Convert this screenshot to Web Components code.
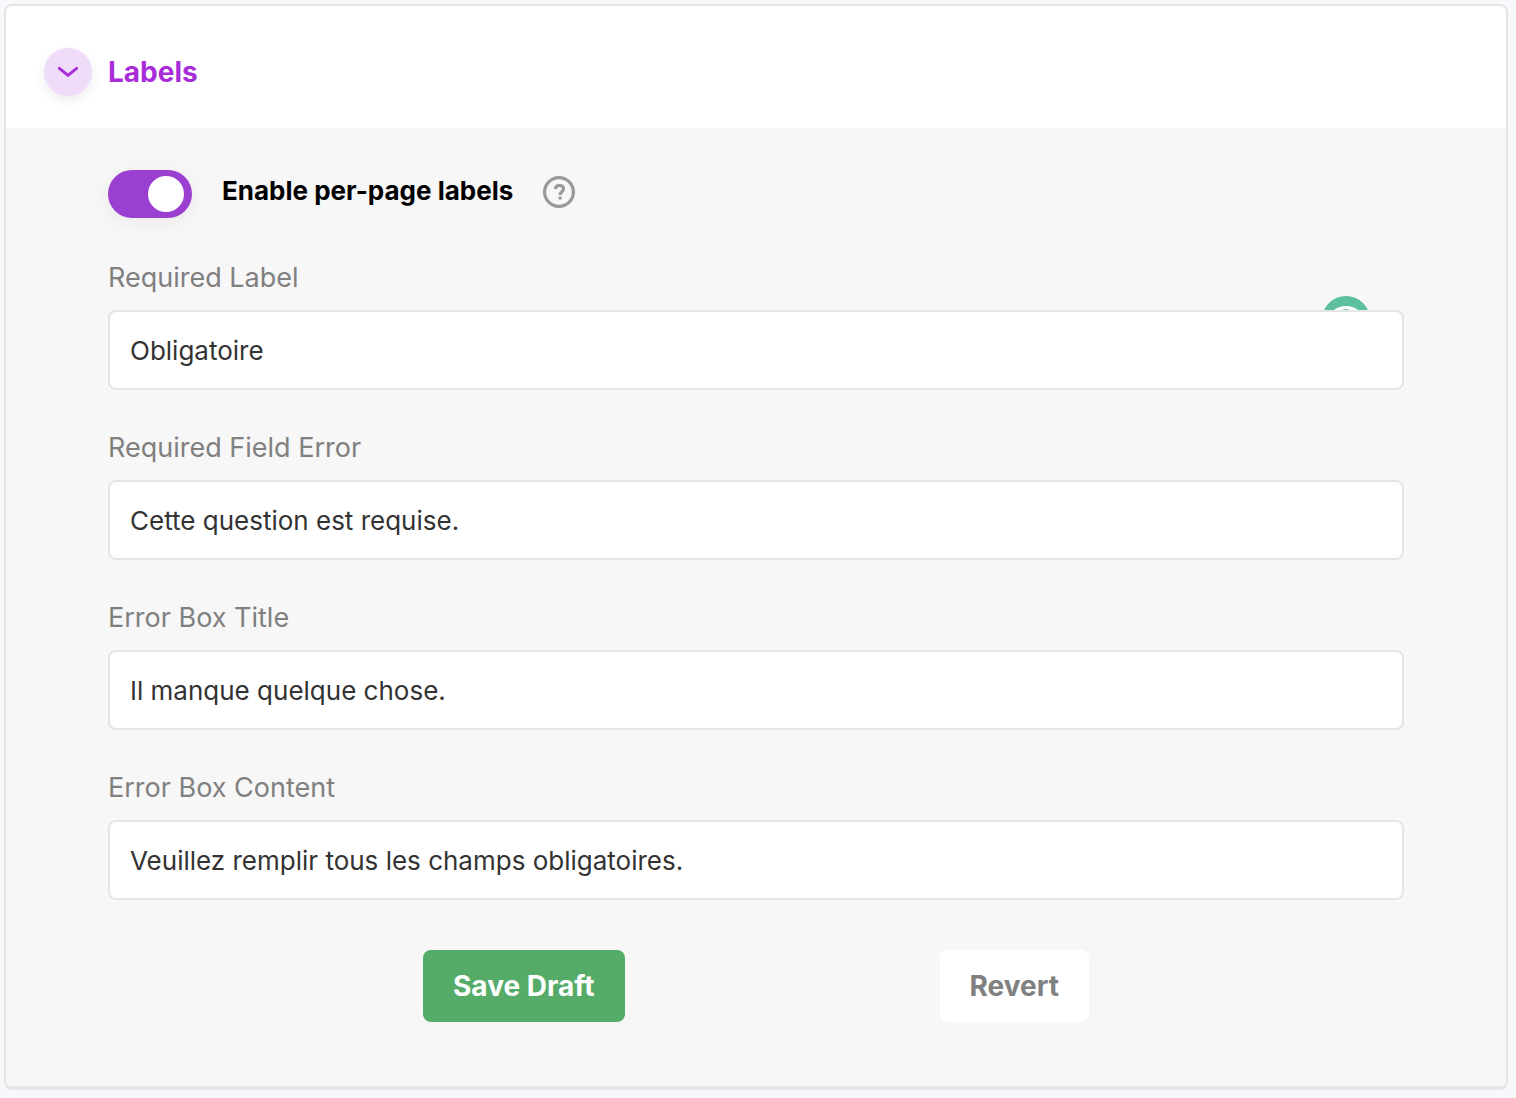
<!DOCTYPE html>
<html lang="en">
<head>
<meta charset="utf-8">
<meta name="viewport" content="width=device-width, initial-scale=1">
<title>Labels</title>
<style>
  body {
    margin: 0;
    padding: 4px 8px 8px 4px;
    background: #f7f8fc;
    font-family: Inter, "Liberation Sans", sans-serif;
    font-size: 26px;
    line-height: 32px;
    color: #333;
  }
</style>
</head>
<body>
<settings-panel heading="Labels">
  <toggle-switch label="Enable per-page labels" checked></toggle-switch>
  <text-field label="Required Label" value="Obligatoire"><writing-badge slot="badge"></writing-badge></text-field>
  <text-field label="Required Field Error" value="Cette question est requise."></text-field>
  <text-field label="Error Box Title" value="Il manque quelque chose."></text-field>
  <text-field label="Error Box Content" value="Veuillez remplir tous les champs obligatoires."></text-field>
  <action-button slot="actions" variant="primary">Save Draft</action-button>
  <action-button slot="actions">Revert</action-button>
</settings-panel>

<script>
class BaseElement extends HTMLElement {
  connectedCallback() {
    if (!this.shadowRoot) {
      this.attachShadow({ mode: "open" }).innerHTML = this.render();
      this.ready();
    }
  }
  ready() {}
}

customElements.define("settings-panel", class extends BaseElement {
  render() {
    return `
      <style>
        :host { display: block; }
        * { box-sizing: border-box; }
        .card {
          border: 2px solid #e5e5e5; border-bottom-width: 4px; border-radius: 8px;
          background: #f7f7f7; overflow: hidden;
        }
        header { display: flex; align-items: center; gap: 16px; padding: 42px 38px 32px; background: #fff; }
        header button {
          display: grid; place-items: center; width: 48px; height: 48px; padding: 0;
          border: 0; border-radius: 50%; background: #f0dcf8; box-shadow: 0 4px 12px #00000014; cursor: pointer;
        }
        h2 { margin: 0; font-size: 28px; line-height: 36px; font-weight: 700; color: #a82dd8; }
        form { display: flex; flex-direction: column; gap: 30px; padding: 42px 102px 64px; }
        .fields { display: flex; flex-direction: column; gap: 40px; }
        .actions { display: flex; justify-content: space-evenly; padding-top: 20px; }
      </style>
      <section class="card">
        <header>
          <button type="button" aria-label="Collapse section" aria-expanded="true">
            <svg width="24" height="24" viewBox="0 0 24 24" fill="none" stroke="#a82dd8" stroke-width="3" stroke-linecap="round" stroke-linejoin="round"><path d="M3.4 8.3 12 15.4 20.6 8.3"/></svg>
          </button>
          <h2></h2>
        </header>
        <form>
          <div class="fields"><slot></slot></div>
          <div class="actions"><slot name="actions"></slot></div>
        </form>
      </section>`;
  }
  ready() {
    const root = this.shadowRoot;
    root.querySelector("h2").textContent = this.getAttribute("heading");
    const button = root.querySelector("header button");
    button.addEventListener("click", () => {
      const form = root.querySelector("form");
      form.hidden = !form.hidden;
      form.style.display = form.hidden ? "none" : "";
      button.setAttribute("aria-expanded", String(!form.hidden));
    });
  }
});

customElements.define("toggle-switch", class extends BaseElement {
  render() {
    return `
      <style>
        :host { display: flex; align-items: flex-start; height: 50px; }
        input {
          appearance: none; display: flex; justify-content: flex-start; width: 84px; height: 48px;
          margin: 0; padding: 6px 8px; box-sizing: border-box; border-radius: 24px;
          background: #bbb; box-shadow: 0 4px 20px #0000000f; cursor: pointer;
        }
        input:checked { justify-content: flex-end; background: #9b3fd1; }
        input::before { content: ""; width: 36px; height: 36px; border-radius: 50%; background: #fff; }
        label { margin-left: 30px; padding-top: 5px; font-size: 26px; line-height: 32px; font-weight: 700; color: #000; }
        button { margin: 5px 0 0 30px; padding: 0; border: 0; background: none; cursor: help; }
        svg { display: block; }
      </style>
      <input type="checkbox" id="toggle" role="switch">
      <label for="toggle"></label>
      <button type="button" aria-label="Help">
        <svg width="32" height="34" viewBox="0 0 32 34" fill="none" stroke="#999"><circle cx="16" cy="17" r="14.4" stroke-width="3.2"/><path d="M12.3 14C12.5 11.6 14 10.5 16.5 10.5 18.9 10.5 20.5 11.8 20.5 13.9 20.5 16.7 17.1 16.8 17.1 20" stroke-width="3.2"/><path d="M17.1 21.4V24.4" stroke-width="3.2"/></svg>
      </button>`;
  }
  ready() {
    this.shadowRoot.querySelector("label").textContent = this.getAttribute("label");
    this.shadowRoot.querySelector("input").checked = this.hasAttribute("checked");
  }
});

customElements.define("text-field", class extends BaseElement {
  render() {
    return `
      <style>
        :host { display: flex; flex-direction: column; gap: 14px; }
        label { font-size: 27px; line-height: 36px; color: #808080; }
        .box { position: relative; display: flex; }
        input {
          position: relative; flex: 1; min-width: 0; height: 80px; margin: 0; padding: 0 20px;
          box-sizing: border-box; border: 2px solid #e5e5e5; border-radius: 8px;
          background: #fff; color: #333; font: 26px/32px Inter, "Liberation Sans", sans-serif; outline: 0;
        }
        ::slotted(*) { position: absolute; top: -14px; right: 34px; }
      </style>
      <label for="field"></label>
      <div class="box"><slot name="badge"></slot><input type="text" id="field"></div>`;
  }
  ready() {
    this.shadowRoot.querySelector("label").textContent = this.getAttribute("label");
    this.shadowRoot.querySelector("input").value = this.getAttribute("value");
  }
});

customElements.define("writing-badge", class extends BaseElement {
  render() {
    return `
      <style>:host { display: block; width: 48px; height: 48px; } svg { display: block; }</style>
      <svg width="48" height="48" viewBox="0 0 48 48" aria-hidden="true"><circle cx="24" cy="24" r="24" fill="#5bc09b"/><ellipse cx="24" cy="24" rx="17" ry="14" fill="#fff"/><ellipse cx="24" cy="24" rx="8" ry="11" fill="#5bc09b"/></svg>`;
  }
});

customElements.define("action-button", class extends BaseElement {
  render() {
    return `
      <style>
        :host { display: block; }
        button {
          height: 72px; padding: 0 30px; border: 0; border-radius: 8px; background: #fff; color: #808080;
          font: 700 28px/36px Inter, "Liberation Sans", sans-serif; cursor: pointer;
        }
        :host([variant="primary"]) button { background: #55ac68; color: #fff; }
      </style>
      <button type="button"><slot></slot></button>`;
  }
});
</script>
</body>
</html>
